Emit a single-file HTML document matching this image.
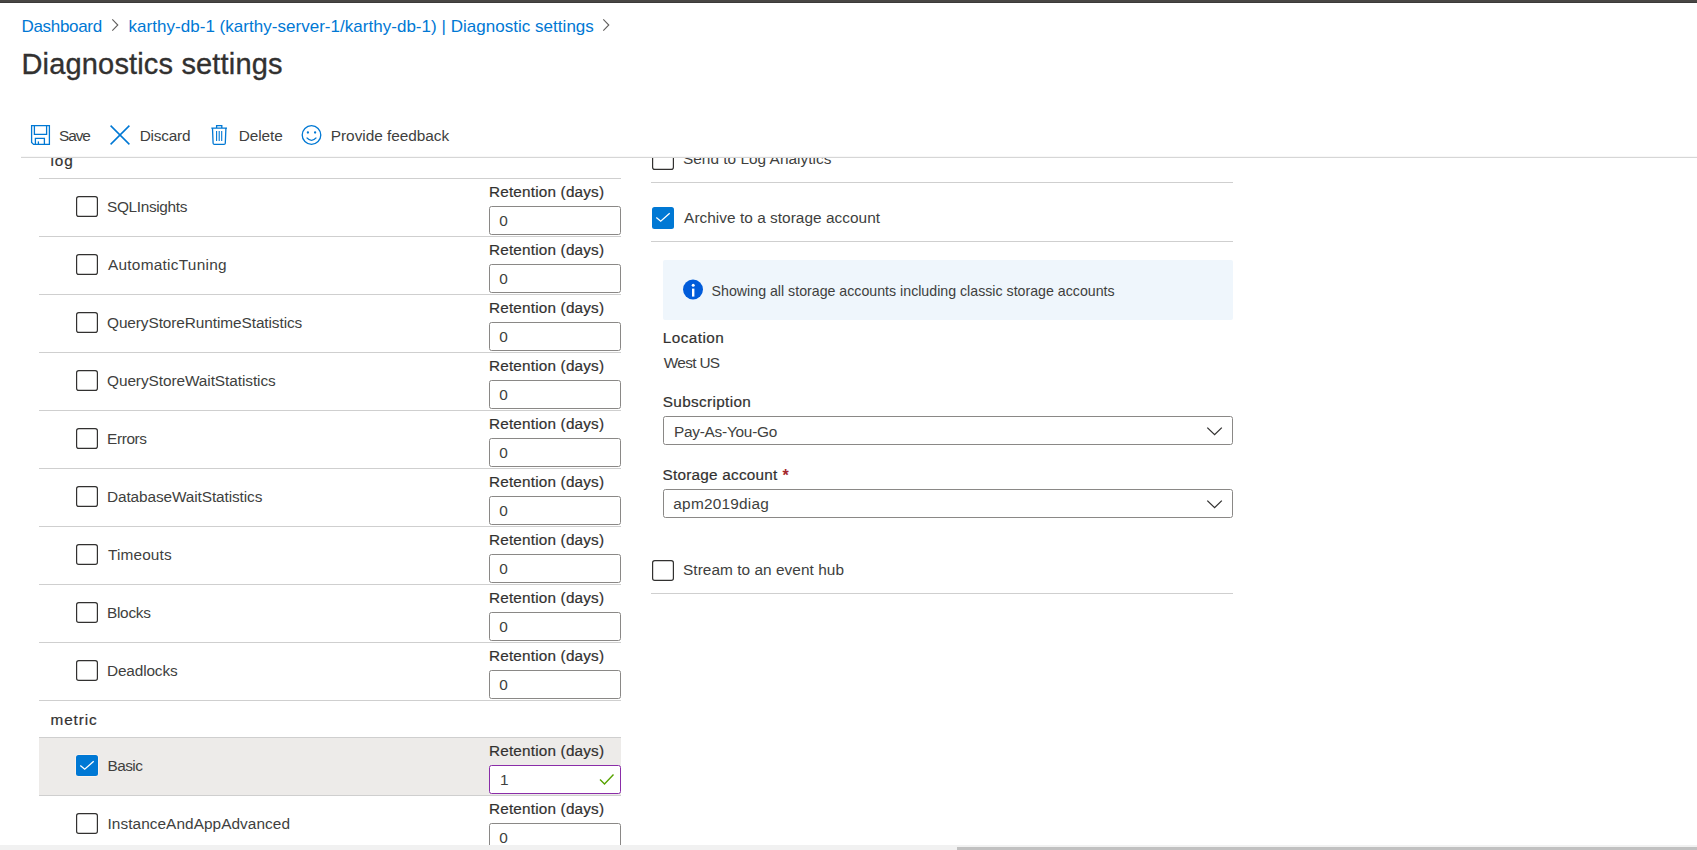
<!DOCTYPE html>
<html><head><meta charset="utf-8"><style>
html,body{margin:0;padding:0;background:#fff;width:1697px;height:850px;overflow:hidden;}
.t{position:absolute;line-height:1;white-space:nowrap;font-family:"Liberation Sans", sans-serif;color:#323130;}
.layer{position:absolute;left:0;top:0;width:1697px;height:850px;}
#content{z-index:1;}
#header{z-index:2;height:157px;background:#fff;overflow:hidden;}
#sep{position:absolute;z-index:2;left:21px;top:156px;width:1676px;height:1px;background:#f8f8f8;border-bottom:1px solid #d6d6d6;}
#sb{position:absolute;z-index:3;left:0;top:845px;width:1697px;height:5px;background:#f1f1f1;}
svg{position:absolute;left:0;top:0;}
</style></head><body>
<div id="content" class="layer">
<svg width="1697" height="850" viewBox="0 0 1697 850"><rect x="39" y="178" width="582" height="1" fill="#cfcfcf"/><rect x="76.6" y="196.6" width="20.8" height="19.8" rx="2.2" fill="none" stroke="#323130" stroke-width="1.2"/><rect x="489.5" y="206.5" width="131" height="28" rx="2" fill="#fff" stroke="#8a8886" stroke-width="1"/><rect x="39" y="236" width="582" height="1" fill="#cfcfcf"/><rect x="76.6" y="254.6" width="20.8" height="19.8" rx="2.2" fill="none" stroke="#323130" stroke-width="1.2"/><rect x="489.5" y="264.5" width="131" height="28" rx="2" fill="#fff" stroke="#8a8886" stroke-width="1"/><rect x="39" y="294" width="582" height="1" fill="#cfcfcf"/><rect x="76.6" y="312.6" width="20.8" height="19.8" rx="2.2" fill="none" stroke="#323130" stroke-width="1.2"/><rect x="489.5" y="322.5" width="131" height="28" rx="2" fill="#fff" stroke="#8a8886" stroke-width="1"/><rect x="39" y="352" width="582" height="1" fill="#cfcfcf"/><rect x="76.6" y="370.6" width="20.8" height="19.8" rx="2.2" fill="none" stroke="#323130" stroke-width="1.2"/><rect x="489.5" y="380.5" width="131" height="28" rx="2" fill="#fff" stroke="#8a8886" stroke-width="1"/><rect x="39" y="410" width="582" height="1" fill="#cfcfcf"/><rect x="76.6" y="428.6" width="20.8" height="19.8" rx="2.2" fill="none" stroke="#323130" stroke-width="1.2"/><rect x="489.5" y="438.5" width="131" height="28" rx="2" fill="#fff" stroke="#8a8886" stroke-width="1"/><rect x="39" y="468" width="582" height="1" fill="#cfcfcf"/><rect x="76.6" y="486.6" width="20.8" height="19.8" rx="2.2" fill="none" stroke="#323130" stroke-width="1.2"/><rect x="489.5" y="496.5" width="131" height="28" rx="2" fill="#fff" stroke="#8a8886" stroke-width="1"/><rect x="39" y="526" width="582" height="1" fill="#cfcfcf"/><rect x="76.6" y="544.6" width="20.8" height="19.8" rx="2.2" fill="none" stroke="#323130" stroke-width="1.2"/><rect x="489.5" y="554.5" width="131" height="28" rx="2" fill="#fff" stroke="#8a8886" stroke-width="1"/><rect x="39" y="584" width="582" height="1" fill="#cfcfcf"/><rect x="76.6" y="602.6" width="20.8" height="19.8" rx="2.2" fill="none" stroke="#323130" stroke-width="1.2"/><rect x="489.5" y="612.5" width="131" height="28" rx="2" fill="#fff" stroke="#8a8886" stroke-width="1"/><rect x="39" y="642" width="582" height="1" fill="#cfcfcf"/><rect x="76.6" y="660.6" width="20.8" height="19.8" rx="2.2" fill="none" stroke="#323130" stroke-width="1.2"/><rect x="489.5" y="670.5" width="131" height="28" rx="2" fill="#fff" stroke="#8a8886" stroke-width="1"/><rect x="39" y="700" width="582" height="1" fill="#cfcfcf"/><rect x="39" y="737" width="582" height="58" fill="#edebe9"/><rect x="39" y="737" width="582" height="1" fill="#cfcfcf"/><rect x="39" y="795" width="582" height="1" fill="#cfcfcf"/><rect x="75.5" y="754.5" width="23" height="22" rx="3" fill="none" stroke="#fbf3ee" stroke-width="1"/><rect x="76" y="755" width="22" height="21" rx="2.5" fill="#0078d4"/><path d="M80.3 765.4 L84.7 769.2 L93.7 761.3" fill="none" stroke="#fff" stroke-width="1.3"/><rect x="489.5" y="765.5" width="131" height="28" rx="2" fill="#fff" stroke="#8a2da8" stroke-width="1"/><path d="M600 779.5 L604.5 784 L613.5 774.5" fill="none" stroke="#57a300" stroke-width="1.4"/><rect x="76.6" y="813.6" width="20.8" height="19.8" rx="2.2" fill="none" stroke="#323130" stroke-width="1.2"/><rect x="489.5" y="823.5" width="131" height="28" rx="2" fill="#fff" stroke="#8a8886" stroke-width="1"/><rect x="652.6" y="149.6" width="20.8" height="19.8" rx="2.2" fill="none" stroke="#323130" stroke-width="1.2"/><rect x="651" y="182" width="582" height="1" fill="#cfcfcf"/><rect x="652" y="207" width="22" height="22" rx="2.5" fill="#0078d4"/><path d="M656.3 217.4 L660.7 221.2 L669.7 213.3" fill="none" stroke="#fff" stroke-width="1.3"/><rect x="651" y="241" width="582" height="1" fill="#cfcfcf"/><rect x="663" y="260" width="570" height="60" rx="2" fill="#eff6fc"/><circle cx="693" cy="289.5" r="10" fill="#015cda"/><circle cx="693.2" cy="285.2" r="1.5" fill="#fff"/><rect x="692" y="288.6" width="2.4" height="8" fill="#fff"/><rect x="663.5" y="416.5" width="569" height="28" rx="2" fill="#fff" stroke="#8a8886" stroke-width="1"/><path d="M1207.3 427.6 L1214.6 434.7 L1221.8 427.6" fill="none" stroke="#323130" stroke-width="1.3"/><rect x="663.5" y="489.5" width="569" height="28" rx="2" fill="#fff" stroke="#8a8886" stroke-width="1"/><path d="M1207.3 500.6 L1214.6 507.7 L1221.8 500.6" fill="none" stroke="#323130" stroke-width="1.3"/><rect x="652.6" y="560.6" width="20.8" height="19.8" rx="2.2" fill="none" stroke="#323130" stroke-width="1.2"/><rect x="651" y="593" width="582" height="1" fill="#cfcfcf"/></svg>
<div class="t" style="left:50.4px;top:153px;font-size:15.3px;-webkit-text-stroke:0.2px #323130;letter-spacing:1.0px;">log</div><div class="t" style="left:107px;top:199px;font-size:15.4px;letter-spacing:-0.34px;color:#403f3e;">SQLInsights</div><div class="t" style="left:489px;top:184px;font-size:15.3px;-webkit-text-stroke:0.2px #323130;letter-spacing:0.187px;">Retention (days)</div><div class="t" style="left:499.2px;top:213px;font-size:15.4px;color:#403f3e;">0</div><div class="t" style="left:108px;top:257px;font-size:15.4px;letter-spacing:0.257px;color:#403f3e;">AutomaticTuning</div><div class="t" style="left:489px;top:242px;font-size:15.3px;-webkit-text-stroke:0.2px #323130;letter-spacing:0.187px;">Retention (days)</div><div class="t" style="left:499.2px;top:271px;font-size:15.4px;color:#403f3e;">0</div><div class="t" style="left:107px;top:315px;font-size:15.4px;letter-spacing:-0.088px;color:#403f3e;">QueryStoreRuntimeStatistics</div><div class="t" style="left:489px;top:300px;font-size:15.3px;-webkit-text-stroke:0.2px #323130;letter-spacing:0.187px;">Retention (days)</div><div class="t" style="left:499.2px;top:329px;font-size:15.4px;color:#403f3e;">0</div><div class="t" style="left:107px;top:373px;font-size:15.4px;letter-spacing:-0.074px;color:#403f3e;">QueryStoreWaitStatistics</div><div class="t" style="left:489px;top:358px;font-size:15.3px;-webkit-text-stroke:0.2px #323130;letter-spacing:0.187px;">Retention (days)</div><div class="t" style="left:499.2px;top:387px;font-size:15.4px;color:#403f3e;">0</div><div class="t" style="left:107px;top:431px;font-size:15.4px;letter-spacing:-0.38px;color:#403f3e;">Errors</div><div class="t" style="left:489px;top:416px;font-size:15.3px;-webkit-text-stroke:0.2px #323130;letter-spacing:0.187px;">Retention (days)</div><div class="t" style="left:499.2px;top:445px;font-size:15.4px;color:#403f3e;">0</div><div class="t" style="left:107px;top:489px;font-size:15.4px;letter-spacing:-0.11px;color:#403f3e;">DatabaseWaitStatistics</div><div class="t" style="left:489px;top:474px;font-size:15.3px;-webkit-text-stroke:0.2px #323130;letter-spacing:0.187px;">Retention (days)</div><div class="t" style="left:499.2px;top:503px;font-size:15.4px;color:#403f3e;">0</div><div class="t" style="left:108px;top:547px;font-size:15.4px;letter-spacing:0.129px;color:#403f3e;">Timeouts</div><div class="t" style="left:489px;top:532px;font-size:15.3px;-webkit-text-stroke:0.2px #323130;letter-spacing:0.187px;">Retention (days)</div><div class="t" style="left:499.2px;top:561px;font-size:15.4px;color:#403f3e;">0</div><div class="t" style="left:107px;top:605px;font-size:15.4px;letter-spacing:-0.28px;color:#403f3e;">Blocks</div><div class="t" style="left:489px;top:590px;font-size:15.3px;-webkit-text-stroke:0.2px #323130;letter-spacing:0.187px;">Retention (days)</div><div class="t" style="left:499.2px;top:619px;font-size:15.4px;color:#403f3e;">0</div><div class="t" style="left:107px;top:663px;font-size:15.4px;letter-spacing:-0.15px;color:#403f3e;">Deadlocks</div><div class="t" style="left:489px;top:648px;font-size:15.3px;-webkit-text-stroke:0.2px #323130;letter-spacing:0.187px;">Retention (days)</div><div class="t" style="left:499.2px;top:677px;font-size:15.4px;color:#403f3e;">0</div><div class="t" style="left:50.6px;top:712px;font-size:15.3px;-webkit-text-stroke:0.2px #323130;letter-spacing:0.86px;">metric</div><div class="t" style="left:107.5px;top:758px;font-size:15.4px;letter-spacing:-0.575px;color:#403f3e;">Basic</div><div class="t" style="left:489px;top:743px;font-size:15.3px;-webkit-text-stroke:0.2px #323130;letter-spacing:0.187px;">Retention (days)</div><div class="t" style="left:500px;top:772px;font-size:15.4px;color:#403f3e;">1</div><div class="t" style="left:107.5px;top:816px;font-size:15.4px;letter-spacing:0.052px;color:#403f3e;">InstanceAndAppAdvanced</div><div class="t" style="left:489px;top:801px;font-size:15.3px;-webkit-text-stroke:0.2px #323130;letter-spacing:0.187px;">Retention (days)</div><div class="t" style="left:499.2px;top:830px;font-size:15.4px;color:#403f3e;">0</div><div class="t" style="left:683px;top:151px;font-size:15.4px;letter-spacing:0.015px;color:#403f3e;">Send to Log Analytics</div><div class="t" style="left:684.1px;top:210px;font-size:15.4px;letter-spacing:0.033px;color:#403f3e;">Archive to a storage account</div><div class="t" style="left:711.6px;top:284px;font-size:14.2px;color:#403f3e;">Showing all storage accounts including classic storage accounts</div><div class="t" style="left:662.8px;top:330px;font-size:15.3px;-webkit-text-stroke:0.2px #323130;letter-spacing:0.443px;">Location</div><div class="t" style="left:663.8px;top:355px;font-size:15.4px;letter-spacing:-0.683px;color:#403f3e;">West US</div><div class="t" style="left:662.8px;top:394px;font-size:15.3px;-webkit-text-stroke:0.2px #323130;letter-spacing:0.345px;">Subscription</div><div class="t" style="left:673.9px;top:424px;font-size:15.4px;letter-spacing:-0.242px;color:#403f3e;">Pay-As-You-Go</div><div class="t" style="left:662.5px;top:467px;font-size:15.3px;-webkit-text-stroke:0.2px #323130;letter-spacing:0.243px;">Storage account</div><div class="t" style="left:673.3px;top:496px;font-size:15.4px;letter-spacing:0.23px;color:#403f3e;">apm2019diag</div><div class="t" style="left:683px;top:562px;font-size:15.4px;letter-spacing:0.048px;color:#403f3e;">Stream to an event hub</div><div class="t" style="left:782.5px;top:468px;font-size:16px;font-weight:700;color:#a4262c">*</div>
</div>
<div id="header" class="layer">
<svg width="1697" height="157" viewBox="0 0 1697 157"><rect x="0" y="0" width="1697" height="2" fill="#484644"/><rect x="0" y="2" width="1697" height="1" fill="#3b3a39"/><path d="M112.3 19.3 L117.8 25 L112.3 30.7" fill="none" stroke="#605e5c" stroke-width="1.1"/><path d="M603.3 19.3 L608.8 25 L603.3 30.7" fill="none" stroke="#605e5c" stroke-width="1.1"/><path d="M31.6 125.6 H49.4 V144.4 H33.6 L31.6 142.4 Z" fill="none" stroke="#0078d4" stroke-width="1.3"/><path d="M34.4 125.6 V134.4 H46.6 V125.6" fill="none" stroke="#0078d4" stroke-width="1.3"/><path d="M35.4 144.4 V138.4 H44.4 V144.4" fill="none" stroke="#0078d4" stroke-width="1.3"/><path d="M38.4 141.4 V144.4" fill="none" stroke="#0078d4" stroke-width="1.3"/><path d="M110.6 125.6 L129.4 144.4 M129.4 125.6 L110.6 144.4" fill="none" stroke="#0078d4" stroke-width="1.5"/><path d="M211.3 128.2 H227 M216.6 128 V125.6 H221.8 V128 M212.5 128.2 L213.1 143.2 Q213.2 144.4 214.4 144.4 H224 Q225.2 144.4 225.3 143.2 L225.9 128.2" fill="none" stroke="#0078d4" stroke-width="1.3"/><path d="M216.6 131 V141 M219.2 131 V141 M221.7 131 V141" fill="none" stroke="#0078d4" stroke-width="1.1"/><circle cx="311.5" cy="135" r="9.3" fill="none" stroke="#0078d4" stroke-width="1.3"/><circle cx="307.9" cy="132.5" r="1.15" fill="#0078d4"/><circle cx="315.1" cy="132.5" r="1.15" fill="#0078d4"/><path d="M306.6 137.6 Q311.5 143 316.4 137.6" fill="none" stroke="#0078d4" stroke-width="1.3"/><rect x="21" y="157" width="1676" height="1" fill="#d2d0ce"/></svg>
<div class="t" style="left:21.5px;top:18px;font-size:17px;letter-spacing:-0.312px;color:#0078d4;">Dashboard</div><div class="t" style="left:128.6px;top:18px;font-size:17px;letter-spacing:0.027px;color:#0078d4;">karthy-db-1 (karthy-server-1/karthy-db-1) | Diagnostic settings</div><div class="t" style="left:21.5px;top:50px;font-size:29px;-webkit-text-stroke:0.35px #323130;letter-spacing:0.163px;">Diagnostics settings</div><div class="t" style="left:59px;top:128px;font-size:15.4px;letter-spacing:-1.067px;color:#403f3e;">Save</div><div class="t" style="left:139.7px;top:128px;font-size:15.4px;letter-spacing:-0.233px;color:#403f3e;">Discard</div><div class="t" style="left:238.8px;top:128px;font-size:15.4px;letter-spacing:-0.12px;color:#403f3e;">Delete</div><div class="t" style="left:330.8px;top:128px;font-size:15.4px;letter-spacing:-0.04px;color:#403f3e;">Provide feedback</div>
</div>
<div id="sep"></div>
<div id="sb"><div style="position:absolute;left:957px;top:2px;width:740px;height:3px;background:#c1c1c1"></div></div>
</body></html>
